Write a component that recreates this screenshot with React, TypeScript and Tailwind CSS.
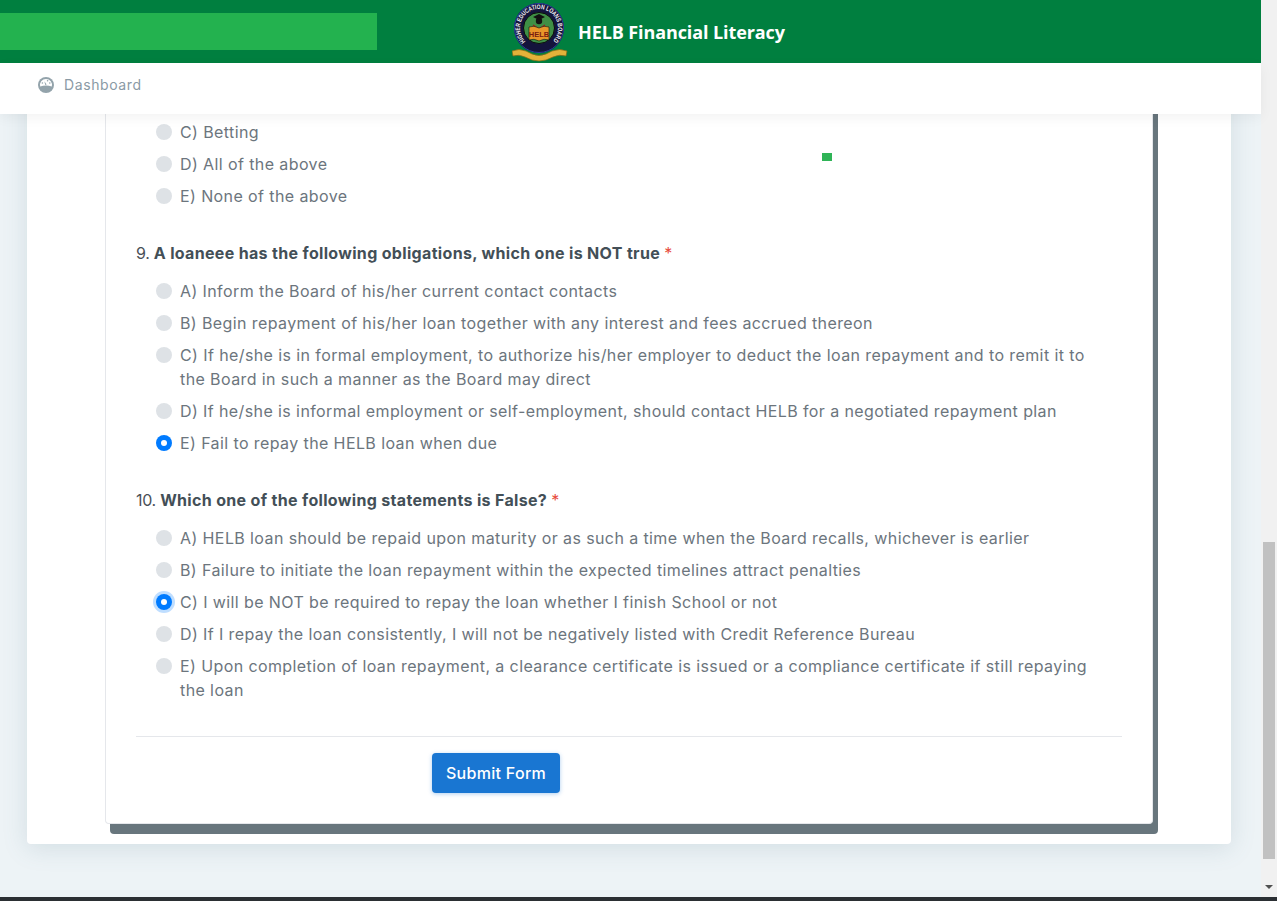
import React from 'react';

const FONT = "font-['Inter','Liberation_Sans',sans-serif]";

type Question = {
    number?: number;
    title?: string;
    selected?: string;
    focused?: boolean;
    options: string[];
};

// The page is scrolled down, so the first question only shows its last options
const questions: Question[] = [
    {
        options: ['C) Betting', 'D) All of the above', 'E) None of the above']
    },
    {
        number: 9,
        title: 'A loaneee has the following obligations, which one is NOT true',
        selected: 'E',
        options: [
            'A) Inform the Board of his/her current contact contacts',
            'B) Begin repayment of his/her loan together with any interest and fees accrued thereon',
            'C) If he/she is in formal employment, to authorize his/her employer to deduct the loan repayment and to remit it to the Board in such a manner as the Board may direct',
            'D) If he/she is informal employment or self-employment, should contact HELB for a negotiated repayment plan',
            'E) Fail to repay the HELB loan when due'
        ]
    },
    {
        number: 10,
        title: 'Which one of the following statements is False?',
        selected: 'C',
        focused: true,
        options: [
            'A) HELB loan should be repaid upon maturity or as such a time when the Board recalls, whichever is earlier',
            'B) Failure to initiate the loan repayment within the expected timelines attract penalties',
            'C) I will be NOT be required to repay the loan whether I finish School or not',
            'D) If I repay the loan consistently, I will not be negatively listed with Credit Reference Bureau',
            'E) Upon completion of loan repayment, a clearance certificate is issued or a compliance certificate if still repaying the loan'
        ]
    }
];

const Logo: React.FC = () => (
    <svg width="56" height="60" viewBox="0 0 56 60" className="shrink-0">
        <defs>
            <path id="logo-ring" d="M13.6 39.4 A19 19 0 1 1 40.4 39.4" />
        </defs>
        <circle cx="27" cy="26" r="25" fill="#14143c" />
        <circle cx="27" cy="26" r="24.5" fill="none" stroke="#2b3f9a" strokeWidth="1" />
        <text fontFamily="'Liberation Sans', sans-serif" fontSize="6.5" fontWeight="700" fill="#f4f4f4">
            <textPath href="#logo-ring" textLength="88" lengthAdjust="spacingAndGlyphs">HIGHER EDUCATION LOANS BOARD</textPath>
        </text>
        <circle cx="27" cy="26" r="15.5" fill="#3f8f45" stroke="#0c0c0c" strokeWidth="1" />
        <path d="M27 12 L33 15 L27 18 L21 15 Z" fill="#111" />
        <circle cx="27" cy="19" r="3.2" fill="#111" />
        <path d="M21 23 L27 27 L33 23" fill="none" stroke="#a11d1d" strokeWidth="1.2" />
        <path d="M17 25 Q22 23 27 26 Q32 23 37 25 V38 Q32 36 27 39 Q22 36 17 38 Z" fill="#e8962a" stroke="#111" strokeWidth="0.6" />
        <text x="27" y="35" textAnchor="middle" fontFamily="'Liberation Sans', sans-serif" fontSize="7.5" fontWeight="700" fill="#7a1c10">HELB</text>
        <path d="M0 49 Q7 46 14 49 L20 52 Q27 55 34 52 L40 49 Q48 46 55 49 L54 54 Q47 52 41 55 L34 58 Q27 60 20 58 L13 55 Q7 52 1 54 Z" fill="#e3b23a" stroke="#8a6a14" strokeWidth="0.7" />
    </svg>
);

const GaugeIcon: React.FC = () => (
    <svg width="16" height="16" viewBox="0 0 16 16" className="shrink-0">
        <circle cx="8" cy="8" r="8" fill="#93a3ab" />
        <path d="M2.2 9.5 A6 6 0 1 1 13.8 9.5 Q8 7.6 2.2 9.5 Z" fill="#fff" />
        <path d="M7.2 8 L6.4 4.2 L8.6 7.6 Z" fill="#93a3ab" />
        <circle cx="4.4" cy="6" r="0.8" fill="#93a3ab" />
        <circle cx="9.6" cy="3.8" r="0.8" fill="#93a3ab" />
        <circle cx="11.8" cy="6" r="0.8" fill="#93a3ab" />
    </svg>
);

const Radio: React.FC<{ checked: boolean; focused?: boolean }> = ({ checked, focused }) => (
    <span
        className={`mt-1 mr-2 flex h-4 w-4 shrink-0 items-center justify-center rounded-full ${checked ? 'bg-[#007bff]' : 'bg-[#dee2e6]'} ${focused ? 'shadow-[0_0_0_3px_rgba(0,123,255,0.25)]' : ''}`}
    >
        {checked && <span className="h-1.5 w-1.5 rounded-full bg-white" />}
    </span>
);

const QuestionBlock: React.FC<{ question: Question }> = ({ question }) => (
    <div className="mb-[33px]">
        {question.title && (
            <p className="mb-[14px] text-base leading-6 tracking-[-0.3px] text-[#495057]">
                {question.number}. <strong className="font-bold tracking-[0.33px] text-[#434f57]">{question.title}</strong> <span className="text-[#e74c3c]">*</span>
            </p>
        )}
        {question.options.map((option) => {
            const checked = question.selected === option[0];
            return (
                <label key={option} className="mb-2 flex pr-[10px] pl-5 text-base leading-6 tracking-[0.4px] text-[#6c757d]">
                    <Radio checked={checked} focused={checked && question.focused} />
                    <span>{option}</span>
                </label>
            );
        })}
    </div>
);

const App: React.FC = () => {
    return (
        <div className={`flex h-[901px] flex-col overflow-hidden bg-[#edf3f6] ${FONT}`}>
            <div className="flex min-h-0 flex-1">
                <div className="flex min-w-0 flex-1 flex-col">

                    {/* Top bar */}
                    <header className="flex h-[63px] shrink-0 items-center bg-[#007f3f]">
                        <div className="h-[37px] w-[377px] bg-[#23b24f]" />
                        <div className="ml-[135px] flex items-center">
                            <Logo />
                            <span className="mt-[2px] ml-[10px] font-['Open_Sans',sans-serif] text-[18px] font-bold tracking-[-0.1px] text-white">
                                HELB Financial Literacy
                            </span>
                        </div>
                    </header>

                    {/* Menu */}
                    <nav className="relative z-10 flex h-[51px] shrink-0 items-center bg-white pb-[7px] pl-[38px] shadow-[0_4px_12px_rgba(0,0,0,0.05)]">
                        <GaugeIcon />
                        <span className="ml-[10px] text-sm tracking-[0.6px] text-[#8a9aa5]">Dashboard</span>
                    </nav>

                    {/* Scrolled form: the cards start above the fold, behind the menu */}
                    <main className="relative min-h-0 flex-1 overflow-hidden pr-[30px] pl-[27px]">
                        <div className="-mt-[30px] rounded-b bg-white px-[78px] pb-[20px] shadow-[0_4px_24px_rgba(90,130,145,0.18)]">
                            <div className="rounded-b border-x border-b border-[#e5e7eb] bg-white pt-[36px] pr-[30px] pb-[30px] pl-[30px] shadow-[5px_10px_0_#68767d]">
                                {questions.map((question, index) => (
                                    <QuestionBlock key={index} question={question} />
                                ))}
                                <div className="mt-[34px] border-t border-[#e5e7eb] pt-4">
                                    <button className="ml-[296px] block h-10 w-[128px] rounded bg-[#1976d2] text-base font-medium tracking-[0.3px] text-white shadow-[0_1px_4px_rgba(25,118,210,0.35)]">
                                        Submit Form
                                    </button>
                                </div>
                            </div>
                        </div>
                        <div className="absolute top-[39px] left-[822px] h-2 w-2.5 bg-[#2fb457]" />
                    </main>
                </div>

                {/* Scrollbar */}
                <div className="flex w-4 shrink-0 flex-col items-center bg-[#f1f1f1] pt-[542px]">
                    <div className="h-[317px] w-3 bg-[#c1c1c1]" />
                    <div className="mt-[26px] h-0 w-0 border-x-4 border-t-4 border-x-transparent border-t-[#505050]" />
                </div>
            </div>
            <div className="h-1 shrink-0 bg-[#2b2f33]" />
        </div>
    );
};

export default App;
